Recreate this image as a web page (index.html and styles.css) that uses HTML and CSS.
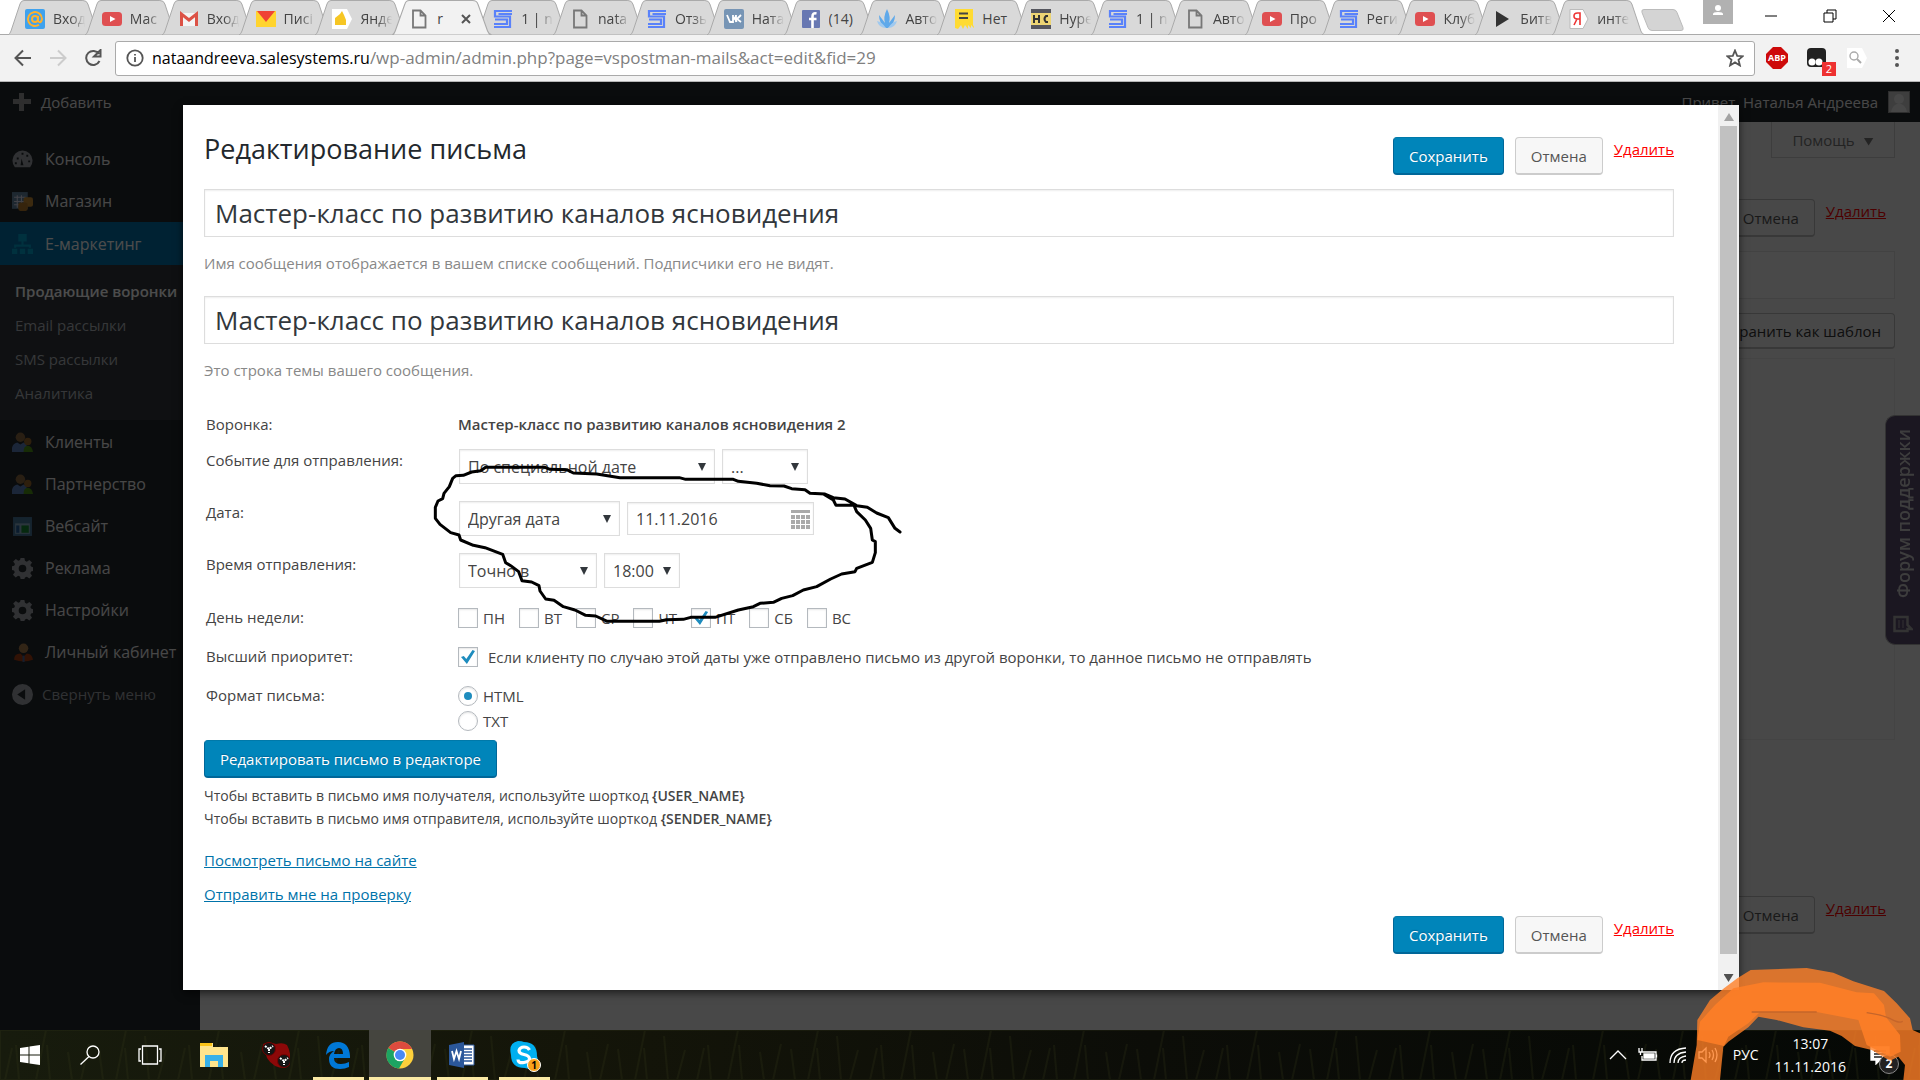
FILE: index.html
```html
<!DOCTYPE html>
<html lang="ru">
<head>
<meta charset="utf-8">
<title>Редактирование письма</title>
<link rel="stylesheet" href="styles.css">
</head>
<body>
<svg class="defs" aria-hidden="true">
  <symbol id="shape" viewBox="0 0 93 35" preserveAspectRatio="none"><path d="M0 35 Q2 34 3 31 L12 4 Q13 .5 16 .5 H75 Q79 .5 80 4 L89 31 Q90 34 93 35Z"/></symbol>
  <symbol id="file" viewBox="0 0 20 20"><path d="M4 1.500h7.500l5 5V18.500H4zM11.500 1.500v5h5" fill="none" stroke="#777" stroke-width="1.800"/></symbol>
  <symbol id="yt" viewBox="0 0 20 20"><rect y="3" width="20" height="14" rx="3.500" fill="#df4f51"/><path d="M8 7l5.500 3L8 13z" fill="#fff"/></symbol>
  <symbol id="sales" viewBox="0 0 20 20"><path d="M19 2H2v5.500h15V18H1M19 5H5.500M2 10.500h12v4.500H1" fill="none" stroke="#5a82fa" stroke-width="2.200"/></symbol>
  <symbol id="gear" viewBox="0 0 22 22"><path fill-rule="evenodd" d="M9 0h4l.6 3 1.900.8L18.200 2 21 4.800l-1.800 2.600.8 1.600 2 .6v4l-2 .6-.8 1.800 1.800 2.500-2.800 2.900-2.600-1.800-2 .8L13 22H9l-.6-2.600-2-.8-2.500 1.800L1 17.500 2.900 15l-.8-1.800L0 12.600v-4L2.300 8l.8-1.700L1.200 3.700 4 1l2.600 1.800L8.400 2zM11 7a4 4 0 100 8 4 4 0 000-8z"/></symbol>
  <symbol id="users" viewBox="0 0 20 20"><circle cx="8" cy="5" r="4.500" fill="#8a6a40"/><path d="M0 19v-4q1-4 5-5l3 2 3-2q4 1 4 9z" fill="#5c80bd"/><circle cx="15" cy="9" r="3.500" fill="#9b6a2c"/><path d="M11 19q0-6 4-6t5 6z" fill="#4f9316"/></symbol>
</svg>

<div class="screen">
  <header class="tabstrip">
    <nav class="tabs" aria-label="Вкладки">
      <div class="tab"><svg class="shape"><use href="#shape"/></svg><svg class="fav" viewBox="0 0 20 20"><rect width="20" height="20" rx="2" fill="#3fa2ee"/><circle cx="10" cy="10" r="3" fill="none" stroke="#ffb12c" stroke-width="2"/><path d="M13 7v5q3 3 4-2a7 7 0 10-3 5.800" fill="none" stroke="#ffb12c" stroke-width="2"/></svg><span>Вход</span></div>
      <div class="tab"><svg class="shape"><use href="#shape"/></svg><svg class="fav"><use href="#yt"/></svg><span>Мас</span></div>
      <div class="tab"><svg class="shape"><use href="#shape"/></svg><svg class="fav" viewBox="0 0 20 20"><path d="M1 4h18v13H1z" fill="#f4f4f4"/><path d="M2.500 17V5l7.500 6 7.500-6v12" fill="none" stroke="#dc5246" stroke-width="3"/></svg><span>Вход</span></div>
      <div class="tab"><svg class="shape"><use href="#shape"/></svg><svg class="fav" viewBox="0 0 20 20"><path d="M0 2h20v16H0z" fill="#ffd42e"/><path d="M1 2h18l-9 11z" fill="#ef4436"/></svg><span>Писі</span></div>
      <div class="tab"><svg class="shape"><use href="#shape"/></svg><svg class="fav" viewBox="0 0 20 20"><path d="M0 0h15l5 10-5 10H0z" fill="#fff"/><path d="M3 9l5-4 2-3 2 4 2 5v5H3z" fill="#f6c624"/></svg><span>Янде</span></div>
      <div class="tab active"><svg class="shape"><use href="#shape"/></svg><svg class="fav"><use href="#file"/></svg><span>r</span><button class="tabclose" aria-label="Закрыть вкладку"><svg viewBox="0 0 10 10"><path d="M1 1l8 8M9 1L1 9"/></svg></button></div>
      <div class="tab"><svg class="shape"><use href="#shape"/></svg><svg class="fav"><use href="#sales"/></svg><span>1 | n</span></div>
      <div class="tab"><svg class="shape"><use href="#shape"/></svg><svg class="fav"><use href="#file"/></svg><span>nata</span></div>
      <div class="tab"><svg class="shape"><use href="#shape"/></svg><svg class="fav"><use href="#sales"/></svg><span>Отзы</span></div>
      <div class="tab"><svg class="shape"><use href="#shape"/></svg><svg class="fav" viewBox="0 0 20 20"><rect width="20" height="20" rx="2" fill="#7795b5"/><path d="M3 6l3 7h3V6M9 9.500q3 0 3-3.500M9 9q3 1 3.500 4M12 6v7M17 6l-4 4 4 3" fill="none" stroke="#fff" stroke-width="1.800"/></svg><span>Ната</span></div>
      <div class="tab"><svg class="shape"><use href="#shape"/></svg><svg class="fav" viewBox="0 0 20 20"><rect x="1" y="1" width="18" height="18" rx="1" fill="#6878b2"/><path d="M15.500 4.500q-4-1-4 3V19M8 10h7.500" fill="none" stroke="#fff" stroke-width="2.600"/></svg><span class="full">(14)</span></div>
      <div class="tab"><svg class="shape"><use href="#shape"/></svg><svg class="fav" viewBox="0 0 20 20"><path d="M10 0q4 8 2 14l6-8q0 9-7 13H9Q2 15 2 6l6 8Q6 8 10 0z" fill="#5fa9ea"/><path d="M0 12q5 1 9 7Q2 19 0 12zm20 0q-5 1-9 7 7 0 9-7z" fill="#9fc9ef"/></svg><span>Авто</span></div>
      <div class="tab"><svg class="shape"><use href="#shape"/></svg><svg class="fav" viewBox="0 0 20 20"><path d="M1 0h18v16l2 4-4-4v3l-3-3v4l-3-4-2 4-2-4-3 4-3-1z" fill="#ffdb32"/><path d="M5 4.500h9M5 9h9" stroke="#444" stroke-width="2"/></svg><span class="full">Нет</span></div>
      <div class="tab"><svg class="shape"><use href="#shape"/></svg><svg class="fav" viewBox="0 0 20 20"><path d="M0 0h20v20H0z" fill="#55565e"/><path d="M0 4h20v12H0z" fill="#ecd474"/><path d="M3 6v8M8 6v8M3 10h5M17 7h-2q-3 3 0 6h2" fill="none" stroke="#333" stroke-width="2"/></svg><span>Нуре</span></div>
      <div class="tab"><svg class="shape"><use href="#shape"/></svg><svg class="fav"><use href="#sales"/></svg><span>1 | n</span></div>
      <div class="tab"><svg class="shape"><use href="#shape"/></svg><svg class="fav"><use href="#file"/></svg><span>Авто</span></div>
      <div class="tab"><svg class="shape"><use href="#shape"/></svg><svg class="fav"><use href="#yt"/></svg><span>Про</span></div>
      <div class="tab"><svg class="shape"><use href="#shape"/></svg><svg class="fav"><use href="#sales"/></svg><span>Реги</span></div>
      <div class="tab"><svg class="shape"><use href="#shape"/></svg><svg class="fav"><use href="#yt"/></svg><span>Клуб</span></div>
      <div class="tab"><svg class="shape"><use href="#shape"/></svg><svg class="fav" viewBox="0 0 20 20"><path d="M4 2l13 8-13 8z" fill="#333"/></svg><span>Битв</span></div>
      <div class="tab"><svg class="shape"><use href="#shape"/></svg><svg class="fav" viewBox="0 0 20 20"><path d="M1 .5h13L19 10l-5 9.500H1z" fill="#fff" stroke="#bbb"/><path d="M11 16V4H8.500Q5 4 5 7t3.500 3H11M8 10l-3 6" fill="none" stroke="#e33" stroke-width="1.600"/></svg><span>инте</span></div>
    </nav>
    <button class="newtab" aria-label="Новая вкладка"><svg viewBox="0 0 44 22"><path d="M3 .5h29q3 0 4 3l6 15q1 3-2 3H11q-3 0-4-3L1 3.500Q0 .5 3 .5z" fill="#d4d4d4" stroke="#bbb"/></svg></button>
    <div class="wincontrols">
      <button class="profile" aria-label="Профиль"><svg viewBox="0 0 30 24"><path d="M0 0h30v24H0z" fill="#b1b1b1"/><circle cx="15" cy="8" r="3" fill="#fff"/><path d="M10 15v-1q0-2 5-2t5 2v1z" fill="#fff"/></svg></button>
      <button aria-label="Свернуть"><svg viewBox="0 0 14 14"><path d="M1 7h12"/></svg></button>
      <button aria-label="Восстановить"><svg viewBox="0 0 14 14"><path d="M1 4h9v9H1zM4 4V1h9v9h-3"/></svg></button>
      <button aria-label="Закрыть"><svg viewBox="0 0 14 14"><path d="M1 1l12 12M13 1L1 13"/></svg></button>
    </div>
  </header>

  <div class="toolbar">
    <button class="nav" aria-label="Назад"><svg viewBox="0 0 18 18"><path d="M17 9H2M9 1.500L1.500 9 9 16.500"/></svg></button>
    <button class="nav off" aria-label="Вперёд"><svg viewBox="0 0 18 18"><path d="M1 9h15M9 1.500L16.500 9 9 16.500"/></svg></button>
    <button class="nav" aria-label="Обновить"><svg viewBox="0 0 18 18"><path d="M15.500 12A7 7 0 1115 5M16.500 1v6.500H10z"/></svg></button>
    <div class="omnibox">
      <svg class="info" viewBox="0 0 18 18"><circle cx="9" cy="9" r="7.700"/><path d="M9 8v5M9 5v1.500"/></svg>
      <span class="url"><b>nataandreeva.salesystems.ru</b>/wp-admin/admin.php?page=vspostman-mails&amp;act=edit&amp;fid=29</span>
      <svg class="star" viewBox="0 0 18 18"><path d="M9 1.500l2.200 5.300 5.600.4-4.300 3.600 1.400 5.600L9 13.400l-4.900 3 1.400-5.600L1.200 7.200l5.600-.4z"/></svg>
    </div>
    <button class="ext" aria-label="AdBlock Plus"><svg viewBox="0 0 22 22"><path d="M7 0h8l7 7v8l-7 7H7l-7-7V7z" fill="#cd0a0a"/></svg><span class="abp">ABP</span></button>
    <button class="ext" aria-label="Расширение"><svg viewBox="0 0 22 22"><rect x="1" y="1" width="19" height="19" rx="4" fill="#222"/><circle cx="6" cy="15" r="3.500" fill="#fff"/><circle cx="13" cy="15" r="3.500" fill="#fff"/></svg><span class="count">2</span></button>
    <button class="ext" aria-label="Поиск"><svg viewBox="0 0 22 22"><path d="M1 1h15l5 10-5 10H1z" fill="#fff"/><circle cx="8" cy="9" r="4" fill="none" stroke="#aaa" stroke-width="1.400"/><path d="M11 12l4 4" stroke="#aaa" stroke-width="2"/></svg></button>
    <button class="ext" aria-label="Меню"><svg viewBox="0 0 22 22"><circle cx="11" cy="4" r="2"/><circle cx="11" cy="11" r="2"/><circle cx="11" cy="18" r="2"/></svg></button>
  </div>

  <div class="page">
    <div class="adminbar">
      <a href="#add" class="add"><svg viewBox="0 0 18 18"><path d="M6 0h5v6h7v5h-7v7H6v-7H0V6h6z" fill="#999"/></svg>Добавить</a>
      <a href="#me" class="me">Привет, Наталья Андреева<svg viewBox="0 0 22 22"><path d="M0 0h22v22H0z" fill="#999"/><path d="M1 1h20v20H1z" fill="#d0d0d0"/><circle cx="11" cy="8" r="5" fill="#eee"/><path d="M3 21q1-6 6-8h4q5 2 6 8z" fill="#eee"/></svg></a>
    </div>
    <div class="admin">
      <nav class="sidebar">
        <a href="#c"><svg viewBox="0 0 22 22"><path fill-rule="evenodd" d="M3 19a10.500 10.500 0 1116 0zM10 10l2 7h-3zM5 9h2v2H5zM10 4h2v2h-2zM15 6h2v2h-2zM17 12h2v2h-2zM3 14h2v2H3z" fill="#a0a5aa"/></svg>Консоль</a>
        <a href="#m"><svg viewBox="0 0 20 20"><path d="M0 1h15v16H0z" fill="#6485a0"/><path d="M2 6h11M2 10h11M2 13h7M5 4v12M9 4v12" stroke="#dde"/><rect x="11" y="6" width="9" height="9" rx="2" fill="#c98e35"/><rect x="6" y="11" width="9" height="8" rx="2" fill="#b67b28"/></svg>Магазин</a>
        <a href="#e" class="current"><svg viewBox="0 0 20 20"><path d="M6 1h8v7H6zM0 15h5v5H0zM7.500 15h5v5h-5zM15 15h5v5h-5zM9 8h2v3h7v3h-2v-1H4v1H2v-3h7z" fill="#00a3d0"/></svg>Е-маркетинг</a>
        <div class="submenu">
          <a href="#s1" class="on">Продающие воронки</a>
          <a href="#s2">Email рассылки</a>
          <a href="#s3">SMS рассылки</a>
          <a href="#s4">Аналитика</a>
        </div>
        <a href="#k"><svg viewBox="0 0 20 20"><use href="#users"/></svg>Клиенты</a>
        <a href="#p"><svg viewBox="0 0 20 20"><use href="#users"/></svg>Партнерство</a>
        <a href="#v"><svg viewBox="0 0 20 20"><path d="M1 1h18v18H1z" fill="#49789c"/><path d="M3 7h14v10H3z" fill="#8fb2c8"/><path d="M4 9h3v7H4z" fill="#245f9a"/><path d="M9 9h7v7H9z" fill="#178a33"/></svg>Вебсайт</a>
        <a href="#r"><svg class="grey"><use href="#gear"/></svg>Реклама</a>
        <a href="#n"><svg class="grey"><use href="#gear"/></svg>Настройки</a>
        <a href="#l"><svg viewBox="0 0 20 20"><circle cx="11" cy="6" r="4.500" fill="#a87c4b"/><path d="M2 17q0-6 6-6l3 3 3-3q5 0 6 6-9 3-18 0z" fill="#a53c13"/><path d="M10 13h2v6h-2z" fill="#469"/></svg>Личный кабинет</a>
        <a href="#z" class="collapse"><svg viewBox="0 0 20 20"><path fill-rule="evenodd" d="M10 0a10 10 0 100 20 10 10 0 000-20zM12.500 5v10L5 10z" fill="#a0a5aa"/></svg>Свернуть меню</a>
      </nav>
      <main class="under">
        <button class="help">Помощь <i class="tri"></i></button>
        <div class="acts"><button class="btn">Отмена</button><a href="#d" class="del">Удалить</a></div>
        <div class="field"></div>
        <button class="btn tpl">Сохранить как шаблон</button>
        <div class="box"></div>
        <div class="acts low"><button class="btn">Отмена</button><a href="#d" class="del">Удалить</a></div>
      </main>
      <a href="#forum" class="forum"><svg viewBox="0 0 20 20"><path d="M3 1.500h14v13H9l-4 4v-4H3z" fill="none" stroke="#aaa" stroke-width="2.500"/><path d="M6 6h8M6 10h8" stroke="#aaa"/></svg><span>Форум поддержки</span></a>
    </div>
    <div class="overlay"></div>

    <section class="modal" role="dialog" aria-labelledby="title">
      <form class="form">
        <div class="head">
          <h1 id="title">Редактирование письма</h1>
          <div class="acts"><button type="button" class="btn primary">Сохранить</button><button type="button" class="btn">Отмена</button><a href="#del" class="del">Удалить</a></div>
        </div>
        <input class="big" aria-label="Имя сообщения" value="Мастер-класс по развитию каналов ясновидения">
        <p class="hint">Имя сообщения отображается в вашем списке сообщений. Подписчики его не видят.</p>
        <input class="big" aria-label="Тема сообщения" value="Мастер-класс по развитию каналов ясновидения">
        <p class="hint">Это строка темы вашего сообщения.</p>

        <div class="rows">
          <div class="row first"><span class="name">Воронка:</span><strong>Мастер-класс по развитию каналов ясновидения 2</strong></div>
          <div class="row tall"><label class="name" for="ev">Событие для отправления:</label><div class="ctl"><span class="sel w1"><select id="ev"><option>По специальной дате</option></select></span><span class="sel w2"><select aria-label="Уточнение"><option>...</option></select></span></div></div>
          <div class="row tall"><label class="name" for="dt">Дата:</label><div class="ctl"><span class="sel w3"><select id="dt"><option>Другая дата</option></select></span><span class="date"><input aria-label="День" value="11.11.2016"><svg viewBox="0 0 19 19"><path d="M0 1.500h19" stroke-width="3"/><path d="M0 7h19M0 12h19M0 17h19" stroke-width="4" stroke-dasharray="4 1"/></svg></span></div></div>
          <div class="row tall"><label class="name" for="tm">Время отправления:</label><div class="ctl"><span class="sel w4"><select id="tm"><option>Точно в</option></select></span><span class="sel w5"><select aria-label="Час"><option>18:00</option></select></span></div></div>
          <div class="row"><span class="name">День недели:</span><div class="days">
            <label><input type="checkbox">ПН</label><label><input type="checkbox">ВТ</label><label><input type="checkbox">СР</label><label><input type="checkbox">ЧТ</label><label><input type="checkbox" checked>ПТ</label><label><input type="checkbox">СБ</label><label><input type="checkbox">ВС</label>
          </div></div>
          <div class="row"><span class="name">Высший приоритет:</span><label class="wide"><input type="checkbox" checked>Если клиенту по случаю этой даты уже отправлено письмо из другой воронки, то данное письмо не отправлять</label></div>
          <div class="row"><span class="name">Формат письма:</span><div class="radios"><label><input type="radio" name="fmt" checked>HTML</label><label><input type="radio" name="fmt">TXT</label></div></div>
        </div>

        <button type="button" class="btn primary">Редактировать письмо в редакторе</button>
        <p class="notes">Чтобы вставить в письмо имя получателя, используйте шорткод <b>{USER_NAME}</b><br>Чтобы вставить в письмо имя отправителя, используйте шорткод <b>{SENDER_NAME}</b></p>
        <p class="link"><a href="#view">Посмотреть письмо на сайте</a></p>
        <p class="link"><a href="#send">Отправить мне на проверку</a></p>
        <div class="acts end"><button type="button" class="btn primary">Сохранить</button><button type="button" class="btn">Отмена</button><a href="#del" class="del">Удалить</a></div>
      </form>
      <div class="scroll"><i class="tri up"></i><div class="thumb"></div><i class="tri"></i></div>
      <svg class="pen" viewBox="0 0 1500 1050"><path d="M1210 282L1240 300 1248 316H1302L1310 335 1336 360 1352 385 1357 420 1366 425V458L1357 487 1310 505 1305 515 1265 522 1232 537 1190 560 1150 570 1118 587 1085 595 1060 607 1020 610 1000 620 955 630 885 652H812L790 658 740 659 718 664H562L527 648 497 646 465 630 430 620 402 601 377 597 360 573 357 557 335 546 306 542 296 515 272 497 257 488 248 463 195 443 160 436 122 420 117 405 92 398 60 373 46 355V322L54 303 68 296 72 280 88 260 98 235 108 227 130 226 155 216 182 212 197 202H375L390 208 440 209 460 219 530 222 600 233H778L797 238H940L955 244 1010 250 1050 257 1092 258 1115 266 1155 269 1170 280 1215 282 1240 293 1275 297 1310 317 1342 322 1370 339 1405 353 1425 385 1440 396"/></svg>
    </section>
  </div>

  <footer class="taskbar">
    <svg class="grass" viewBox="0 0 1920 50" preserveAspectRatio="none"><defs><pattern id="blades" width="173" height="50" patternUnits="userSpaceOnUse"><path d="M5 50L12 18M19 50L16 15M36 50L46 0M50 50L47 15M72 50L68 22M81 50L89 14M103 50L99 19M116 50L126 0M128 50L125 18M149 50L145 6M158 50L166 20"/></pattern></defs><rect width="1920" height="50" fill="url(#blades)"/></svg>
    <button aria-label="Пуск"><svg viewBox="0 0 20 20" fill="#fff"><path d="M0 3l8.500-1.200v7.700H0zM9.500 1.600L20 0v9.500H9.500zM0 10.500h8.500v7.700L0 17zM9.500 10.500H20V20L9.500 18.400z"/></svg></button>
    <button aria-label="Поиск"><svg viewBox="0 0 20 20" fill="none" stroke="#fff" stroke-width="1.300"><circle cx="13" cy="7" r="6"/><path d="M9 11.500L.5 19.500"/></svg></button>
    <button aria-label="Представление задач"><svg class="wider" viewBox="0 0 24 20" fill="none" stroke="#fff" stroke-width="1.300"><path d="M4.500 1h15v18h-15zM3 4H1v12h2M21 4h2v12h-2"/></svg></button>
    <div class="apps">
      <button aria-label="Проводник"><svg viewBox="0 0 28 28"><path d="M0 2h13v4h15v20H0z" fill="#ffe48c"/><path d="M0 2h12v3H0z" fill="#fcc419"/><path d="M5 26V14h18v12h-5v-6h-8v6z" fill="#38b0e8"/></svg></button>
      <button aria-label="Приложение"><svg viewBox="0 0 28 28"><path d="M1 3q6-3 13 0 7-2 11 1 5 9 2 17l-4 6q-12 0-18-10z" fill="#8c0808"/><circle cx="7" cy="8" r="6.500" fill="#151515" stroke="#700"/><circle cx="22" cy="20" r="6.500" fill="#151515" stroke="#700"/><path d="M3 5l4 3 4-3M7 8v4M18 17l4 3 4-3M22 20v4" stroke="#fff" stroke-width="2" stroke-dasharray="2 1" fill="none"/></svg></button>
      <button class="run" aria-label="Edge"><svg viewBox="0 0 28 28"><path d="M2 14Q3 1 14 1q11 0 12 14v2H10q0 6 7 6 4 0 8-2v5q-4 2-9 2Q5 28 5 18q0-5 5-8-5 0-8 4zm8-1h9q0-6-4-6t-5 6z" fill="#0078d7"/></svg></button>
      <button class="run here" aria-label="Chrome"><svg viewBox="0 0 28 28"><circle cx="14" cy="14" r="13.500" fill="#fdd03b"/><path d="M14 14L2.300 7A13.500 13.500 0 0126 8H14z" fill="#dd4b3e"/><path d="M2.300 7A13.500 13.500 0 0013 27.500L19 17l-5-3z" fill="#1da462"/><circle cx="14" cy="14" r="6.300" fill="#fff"/><circle cx="14" cy="14" r="5" fill="#4a89f4"/></svg></button>
      <button class="run" aria-label="Word"><svg viewBox="0 0 28 28"><path d="M14 4h12v20H14z" fill="#fff" stroke="#2b579a"/><path d="M16 8h8M16 11h8M16 14h8M16 17h8M16 20h8" stroke="#2b579a" stroke-width="1.500"/><path d="M1 4l15-3v26L1 24z" fill="#2b579a"/><path d="M4 10l2 8 2.500-8 2.500 8 2-8" fill="none" stroke="#fff" stroke-width="1.800"/></svg></button>
      <button class="run" aria-label="Skype"><svg viewBox="0 0 28 28"><path d="M8 0q4 0 6 1 13 0 13 14 2 6-2 10-4 4-10 2Q1 27 1 14-2 2 8 0z" fill="#00aff0"/><path d="M19.500 9Q18 6 14 6T9 9.500q0 3 5 4t5.500 4-5.500 4-6-3" fill="none" stroke="#fff" stroke-width="3.200"/></svg><span class="dot">1</span></button>
    </div>
    <div class="tray">
      <svg viewBox="0 0 20 20"><path d="M2 14l8-8 8 8"/></svg>
      <svg viewBox="0 0 20 20"><path d="M3 7h15v8H4v-4M18.500 9.500v3M1 3v4h3V3M2.500 7v3"/><path d="M6 9h10v4H6z" fill="#fff"/></svg>
      <svg viewBox="0 0 20 20"><path d="M2 18Q2 4 18 3M6 18Q6 8 18 7M10 18q0-6 8-7M14 18q0-3 4-3"/></svg>
      <svg viewBox="0 0 20 20"><path d="M1 7h3l4-4v14l-4-4H1zM11 7q2 3 0 6M14 5q3 5 0 10M17 3q4 7 0 14"/></svg>
      <span class="lang">РУС</span>
      <time class="clock">13:07<br>11.11.2016</time>
      <span class="note"><svg viewBox="0 0 20 20"><path d="M1 2h18v13h-9l-4 4v-4H1z" fill="#fff"/><path d="M4 6h12M4 9h12M4 12h8" stroke="#222"/></svg><b>2</b></span>
    </div>
  </footer>
  <svg class="marker" viewBox="0 0 960 420">
    <path opacity=".8" d="M272 420L290 315 292 240 330 180 372 145 412 115 452 90 620 84 700 98 760 124 852 153 890 190 930 235 938 270 960 280V420H910L915 375 895 350 870 362 815 330 765 318 725 288 690 272 610 262 530 240 475 230 445 262 385 305 370 320 360 420Z"/>
    <path opacity=".85" d="M292 300L300 245 345 195 400 145 490 127 660 128 770 157 822 160 852 195 858 232 900 285 902 335 870 350 800 315 775 240 650 216H480L445 250 385 290 372 318Z"/>
    <path d="M455 216H650M800 218Q850 225 875 238T908 244" fill="none" stroke="#c5652a" stroke-width="4"/>
  </svg>
</div>
</body>
</html>
```
FILE: styles.css
```css
* { box-sizing: border-box; }
body { margin: 0; font: 15px/24px "Open Sans", "Noto Sans", sans-serif; color: #444; }
button, input, select { font: inherit; color: inherit; margin: 0; }
button { border: 0; background: none; padding: 0; }
p, h1 { margin: 0; }
a { text-decoration: none; color: inherit; }
svg { display: block; flex: none; }
.defs { position: absolute; width: 0; height: 0; }
.screen { position: relative; display: flex; flex-direction: column; min-height: 100vh; overflow: hidden; }

/* browser tabs */
.tabstrip { display: flex; height: 35px; background: #fff; border-bottom: 1px solid #aaa; }
.tabs { display: flex; flex: 1 1 0; max-width: 1645px; padding-left: 8px; min-width: 0; }
.tab { position: relative; display: flex; align-items: center; gap: 8px; flex: 1 1 0; min-width: 0; height: 35px; margin-right: -16px; padding: 2px 14px 0 17px; }
.tab:last-child { margin-right: 0; }
.tab .shape { position: absolute; inset: 0; width: 100%; height: 100%; fill: #d9d9d9; stroke: #aaa; }
.tab.active { z-index: 1; padding-right: 21px; }
.tab.active .shape { fill: #f2f2f2; }
.fav { position: relative; width: 20px; height: 20px; }
.tab span { position: relative; flex: 1; overflow: hidden; white-space: nowrap; font-size: 14px; -webkit-mask-image: linear-gradient(90deg, #000 50%, transparent 95%); mask-image: linear-gradient(90deg, #000 50%, transparent 95%); }
.tab .full, .tab.active span { -webkit-mask-image: none; mask-image: none; }
.tabclose { position: relative; flex: none; }
.tabclose svg { width: 10px; height: 10px; stroke: #555; stroke-width: 2; }
.newtab { align-self: flex-start; margin: 9px 0 0 -4px; }
.newtab svg { width: 44px; height: 22px; }
.wincontrols { display: flex; margin-left: auto; padding-right: 2px; }
.wincontrols button { width: 59px; height: 32px; display: grid; place-items: center; }
.wincontrols svg { width: 14px; height: 14px; fill: none; stroke: #000; }
.wincontrols .profile { width: 30px; height: 24px; margin-right: 8px; }
.wincontrols .profile svg { width: 30px; height: 24px; stroke: none; }

/* address row */
.toolbar { display: flex; align-items: center; height: 47px; padding: 0 3px 0 5px; background: #f2f2f2; border-bottom: 1px solid #b6b6b6; }
.nav { width: 35px; display: grid; place-items: center; }
.nav svg { width: 18px; height: 18px; fill: none; stroke: #555; stroke-width: 2; }
.nav.off svg { stroke: #ccc; }
.omnibox { display: flex; align-items: center; flex: 1; min-width: 0; height: 35px; margin: 0 2px 0 5px; padding: 0 10px; background: #fff; border: 1px solid #aaa; border-radius: 3px; }
.info, .star { width: 18px; height: 18px; fill: none; stroke: #555; stroke-width: 1.800; }
.url { flex: 1; margin-left: 8px; font-size: 17px; color: #808080; white-space: nowrap; overflow: hidden; }
.url b { font-weight: 400; font-size: 16px; color: #000; }
.ext { position: relative; width: 40px; display: grid; place-items: center; }
.ext svg { width: 22px; height: 22px; fill: #555; }
.abp { position: absolute; font-size: 9px; font-weight: 700; color: #fff; }
.count { position: absolute; left: 25px; top: 15px; width: 14px; height: 14px; background: #ee3131; color: #fff; font-size: 11px; line-height: 14px; }

/* admin page */
.page { position: relative; flex: 1; display: flex; flex-direction: column; background: #f1f1f1; }
.adminbar { display: flex; justify-content: space-between; height: 40px; padding: 0 10px 0 13px; background: #23282d; color: #eee; line-height: 42px; }
.adminbar a { display: flex; gap: 10px; align-items: center; font-size: 15px; }
.add svg { width: 18px; height: 18px; }
.me svg { width: 22px; height: 22px; }
.admin { position: relative; flex: 1; display: flex; }
.sidebar { width: 200px; padding-top: 16px; background: #23282d; color: #eee; font-size: 16px; white-space: nowrap; overflow: hidden; }
.sidebar > a { display: flex; align-items: center; gap: 12px; height: 42px; padding-left: 12px; }
.sidebar > a.current { height: 43px; background: #0073aa; color: #fff; }
.sidebar svg { width: 21px; height: 21px; }
.grey { fill: #a0a5aa; }
.submenu { padding: 9px 0 10px 15px; margin-bottom: 1px; background: #32373c; font-size: 15px; color: #b4b9be; }
.submenu a { display: block; line-height: 34px; }
.submenu .on { color: #fff; font-weight: 600; }
.sidebar .collapse { color: #a0a5aa; font-size: 15px; gap: 9px; }
.under { flex: 1; display: flex; flex-direction: column; align-items: flex-end; padding-right: 25px; }
.help { height: 36px; width: 124px; border: 1px solid #ccc; border-top: 0; color: #777; }
.tri { display: inline-block; width: 10px; height: 8px; background: currentColor; clip-path: polygon(0 0, 100% 0, 50% 100%); }
.help .tri { margin-left: 5px; }
.under > .acts { margin: 41px 9px 0 0; }
.field { width: 100%; height: 48px; margin-top: 14px; border: 1px solid #ddd; background: #fff; }
.under .field { background: #f6f6f6; }
.under .btn { background: #f1f1f1; color: #555; border-color: #bbb; }
.under .tpl { height: 36px; margin-top: 14px; padding: 0 13px; color: #333; }
.box { width: 100%; height: 382px; margin-top: 9px; border: 1px solid #e5e5e5; }
.under > .acts.low { margin-top: 156px; }
.forum { position: absolute; right: 0; top: 293px; display: flex; flex-direction: column-reverse; align-items: center; width: 35px; height: 230px; background: #5c4d70; border: 1px solid #aaa; border-right: 0; border-radius: 10px 0 0 10px; color: #ccc; font-size: 18px; font-weight: 600; }
.forum span { flex: 1; writing-mode: vertical-rl; transform: rotate(180deg); padding-top: 8px; line-height: 34px; }
.forum svg { width: 20px; height: 20px; margin: 8px 0 10px; transform: rotate(-90deg); }
.overlay { position: absolute; inset: 0; background: rgba(0, 0, 0, .7); }

/* dialog */
.modal { position: absolute; inset: 23px 181px 40px 183px; display: flex; background: #fff; box-shadow: 0 3px 8px rgba(0, 0, 0, .6); }
.form { flex: 1; min-width: 0; padding: 32px 44px 0 21px; }
.head { display: flex; justify-content: space-between; margin-bottom: 14px; }
h1 { font-size: 27px; line-height: 24px; font-weight: 400; color: #23282d; }
.acts { display: flex; gap: 11px; line-height: 24px; }
.btn { height: 38px; padding: 0 15px; border: 1px solid #ccc; border-bottom-width: 2px; border-radius: 4px; background: #f7f7f7; color: #555; font-size: 15px; white-space: nowrap; }
.btn.primary { background: #0085ba; border-color: #0079a9 #006799 #006799; color: #fff; font-weight: 500; text-shadow: 0 -1px 1px #006799; }
.del { color: #f00; text-decoration: underline; }
.big { display: block; width: 100%; height: 48px; padding: 0 10px; border: 1px solid #ddd; box-shadow: inset 0 1px 2px rgba(0, 0, 0, .07); background: #fff; color: #32373c; font-size: 26px; }
.hint { margin: 14px 0 21px; color: #888; }
.rows { margin: 22px 0 1px; padding-left: 2px; }
.row { display: grid; grid-template-columns: 252px 1fr; align-items: start; min-height: 39px; padding-top: 5px; }
.row.first { min-height: 40px; padding-top: 8px; }
.row.tall { min-height: 52px; padding-top: 4px; }
.row strong { font-weight: 600; }
.ctl { display: flex; gap: 7px; padding-left: 1px; }
.ctl, .days, .row .wide, .radios { margin-top: 1px; }
.sel { position: relative; display: flex; height: 35px; }
.sel::after { content: ""; position: absolute; right: 9px; top: 14px; width: 8px; height: 8px; background: #32373c; clip-path: polygon(0 0, 100% 0, 50% 100%); pointer-events: none; }
.sel select, .date input { appearance: none; width: 100%; padding: 0 8px; border: 1px solid #ddd; border-radius: 0; background: #fff; box-shadow: inset 0 1px 2px rgba(0, 0, 0, .07); font-size: 16px; color: #444; }
.w1 { width: 256px; }
.w2 { width: 86px; }
.w3 { width: 161px; }
.w4 { width: 138px; }
.w5 { width: 76px; }
.date { position: relative; align-self: center; width: 187px; height: 33px; display: flex; }
.date svg { position: absolute; right: 4px; top: 8px; width: 19px; height: 19px; stroke: #aaa; }
.row label { display: flex; align-items: center; gap: 5px; }
.row input[type] { appearance: none; display: grid; place-items: center; flex: none; width: 20px; height: 20px; border: 1px solid #b4b9be; background: #fff; box-shadow: inset 0 1px 2px rgba(0, 0, 0, .1); }
.row input[type=radio] { border-radius: 50%; }
.row input[type=checkbox]:checked::before { content: ""; width: 14px; height: 14px; background: #1e8cbe; clip-path: polygon(0 50%, 20% 42%, 38% 65%, 82% 0, 100% 8%, 42% 100%); }
.row input[type=radio]:checked::before { content: ""; width: 8px; height: 8px; border-radius: 50%; background: #1e8cbe; }
.days { display: flex; gap: 14px; }
.row .wide { gap: 10px; white-space: nowrap; }
.radios { display: grid; gap: 1px; margin-bottom: 6px; }
.notes { margin-top: 6px; font-size: 14px; line-height: 23px; white-space: nowrap; }
.notes b { font-weight: 600; }
.link { margin-top: 10px; color: #0073aa; }
.notes + .link { margin-top: 18px; }
.link a { text-decoration: underline; }
.acts.end { justify-content: flex-end; margin-top: 10px; }
.scroll { width: 21px; display: flex; flex-direction: column; align-items: center; padding: 8px 0; background: #f1f1f1; color: #505050; }
.scroll .up { color: #a3a3a3; transform: rotate(180deg); }
.thumb { flex: 1; width: 17px; margin: 5px 0 20px; background: #c1c1c1; }
.pen { position: absolute; left: 237px; top: 295px; width: 500px; height: 350px; fill: none; stroke: #000; stroke-width: 9; stroke-linejoin: round; stroke-linecap: round; pointer-events: none; }

/* taskbar */
.taskbar { position: relative; display: flex; height: 50px; background: linear-gradient(90deg, #171b0d, #141509 30%, #0c0d08 60%, #050805); color: #fff; }
.grass { position: absolute; inset: 0; width: 100%; height: 100%; fill: none; stroke: #343819; stroke-width: 2; opacity: .25; }
.taskbar > button { position: relative; width: 60px; display: grid; place-items: center; }
.taskbar > button svg { width: 20px; height: 20px; }
.taskbar > button .wider { width: 24px; }
.apps { position: relative; display: flex; margin-left: 3px; }
.apps button { position: relative; width: 62px; display: grid; place-items: center; }
.apps svg { width: 28px; height: 28px; }
.run::after { content: ""; position: absolute; left: 6px; right: 5px; bottom: 0; height: 3px; background: #fae9a4; }
.here { background: #45453f; }
.here::after { left: 0; right: 0; }
.dot { position: absolute; left: 34px; top: 28px; width: 14px; height: 14px; border-radius: 50%; border: 1px solid #fff; background: #f9a11b; color: #000; font-size: 10px; line-height: 12px; font-weight: 700; }
.tray { position: relative; display: flex; align-items: center; gap: 10px; margin-left: auto; padding-right: 30px; font-size: 15px; }
.tray svg { width: 20px; height: 20px; fill: none; stroke: #fff; stroke-width: 1.300; }
.lang { margin-left: 5px; font-size: 14px; }
.clock { margin: 0 14px 0 6px; text-align: center; line-height: 23px; font-size: 14px; }
.note { position: relative; }
.note b { position: absolute; left: 9px; top: 9px; width: 20px; height: 20px; border-radius: 50%; border: 1px solid #888; background: #222; font-size: 12px; line-height: 18px; text-align: center; }
.marker { position: absolute; right: 0; bottom: 0; width: 320px; height: 140px; fill: #ff7f27; pointer-events: none; }
```
